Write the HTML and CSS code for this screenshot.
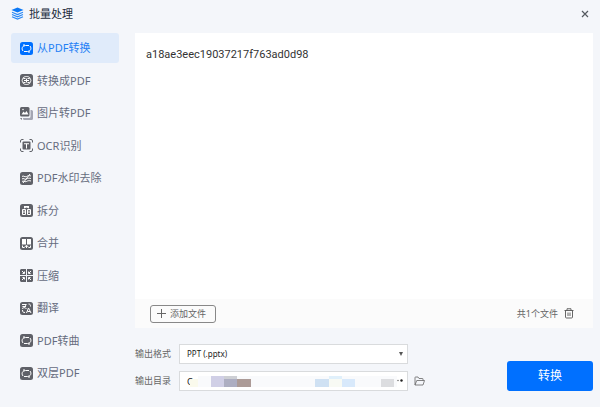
FILE: index.html
```html
<!DOCTYPE html>
<html lang="zh-CN">
<head>
    <meta charset="UTF-8">
    <meta name="viewport" content="width=device-width, initial-scale=1.0">
    <title>批量处理</title>
    <link rel="stylesheet" href="styles.css">
</head>
<body>
    <header class="titlebar">
        <svg class="logo" viewBox="0 0 26 26">
            <path d="M13 1 25 6 13 11 1 6Z" fill="#0b78f5"/>
            <path d="M2 10.500l11 4.500 11-4.500M2 15l11 4.500L24 15M2 19.500l11 4.500 11-4.500" fill="none" stroke="#2b8af7" stroke-width="2.400"/>
        </svg>
        <h1>批量处理</h1>
        <button type="button" class="close" aria-label="关闭">
            <svg viewBox="0 0 8 8"><path d="M1 1l6 6M7 1 1 7" stroke="#555a60" stroke-width="1.200"/></svg>
        </button>
    </header>

    <div class="layout">
        <nav class="sidebar">
            <button type="button" class="item active">
                <svg viewBox="0 0 26 26"><rect width="26" height="26" rx="5" fill="currentColor"/><path d="M6 18c-4-5-1-11 5-11h7M8 4v5M20 8c4 5 1 11-5 11H8M18 17v5" class="line"/></svg>
                <span>从PDF转换</span>
            </button>
            <button type="button" class="item">
                <svg viewBox="0 0 26 26"><rect width="26" height="26" rx="5" fill="currentColor"/><path d="M5 9c2-3 5-4 8-4s6 1 8 4M21 17c-2 3-5 4-8 4s-6-1-8-4M11 9H8c-5 0-5 8 0 8h3M15 9h3c5 0 5 8 0 8h-3M8 13h10M13 9v8" class="line"/></svg>
                <span>转换成PDF</span>
            </button>
            <button type="button" class="item">
                <svg viewBox="0 0 26 26"><path d="M21 6h2a3 3 0 0 1 3 3v14a3 3 0 0 1-3 3H9a3 3 0 0 1-3-3v-1h12a3 3 0 0 0 3-3Z" fill="#a4a6b2"/><rect width="19" height="19" rx="3" fill="currentColor"/><path d="m3 15 4-6 3 3 3-4 4 7Z" fill="#fff"/><circle cx="6" cy="5" r="1.500" fill="#fff"/><path d="M2 22v2h2" fill="none" stroke="currentColor" stroke-width="2"/></svg>
                <span>图片转PDF</span>
            </button>
            <button type="button" class="item">
                <svg viewBox="0 0 26 26"><path d="M1 7V4a3 3 0 0 1 3-3h3M19 1h3a3 3 0 0 1 3 3v3M25 19v3a3 3 0 0 1-3 3h-3M7 25H4a3 3 0 0 1-3-3v-3" fill="none" stroke="currentColor" stroke-width="2"/><rect x="5" y="5" width="16" height="16" rx="2" fill="currentColor"/><path d="M8 9.500h10M13 9.500V19" class="line"/></svg>
                <span>OCR识别</span>
            </button>
            <button type="button" class="item">
                <svg viewBox="0 0 26 26"><rect width="26" height="26" rx="5" fill="currentColor"/><path d="M4 9c3-3 5 2 9 0 3-2 6-2 9-1M4 14c3-3 5 2 9 0 3-2 6-2 9-1M4 19c3-3 5 2 9 0 3-2 6-2 9-1M20 4 6 22" class="line"/></svg>
                <span>PDF水印去除</span>
            </button>
            <button type="button" class="item">
                <svg viewBox="0 0 26 26"><rect width="26" height="26" rx="5" fill="currentColor"/><path d="M8 4h10v5l-5-2-5 2z" fill="#fff"/><path d="M5 11h6v10H5zM15 11h6v10h-6zM8 18v-5M18 18v-5" class="line"/></svg>
                <span>拆分</span>
            </button>
            <button type="button" class="item">
                <svg viewBox="0 0 26 26"><rect width="26" height="26" rx="5" fill="currentColor"/><path d="M4 4h8v11H4zM14 4h8v11h-8z" fill="#fff"/><path d="M5 17v4h4M21 17v4h-4M9 20l4-3 4 3M13 17v5" class="line"/></svg>
                <span>合并</span>
            </button>
            <button type="button" class="item">
                <svg viewBox="0 0 26 26"><path d="M2 0h10v12H0V2zM14 0h10l2 2v10H14zM0 14h12v12H2l-2-2zM14 14h12v10l-2 2H14z" fill="currentColor"/><path d="m4 4 4 4M9 5v4H5M22 4l-4 4M17 5v4h4M4 22l4-4M9 21v-4H5M22 22l-4-4M17 21v-4h4" class="line"/></svg>
                <span>压缩</span>
            </button>
            <button type="button" class="item">
                <svg viewBox="0 0 26 26"><rect width="26" height="26" rx="5" fill="currentColor"/><path d="M4 5h9M5 9h7M12 5c-1 4-4 7-8 8M6 8c1 3 4 4 7 5M17 4c3 0 4 1 4 5M5 16c0 4 1 5 5 5M13 22l4-10 5 10M15 19h5" class="line"/></svg>
                <span>翻译</span>
            </button>
            <button type="button" class="item">
                <svg viewBox="0 0 26 26"><rect width="26" height="26" rx="5" fill="currentColor"/><path d="M6 18c-4-5-1-11 5-11h7M8 4v5M20 8c4 5 1 11-5 11H8M18 17v5" class="line"/></svg>
                <span>PDF转曲</span>
            </button>
            <button type="button" class="item">
                <svg viewBox="0 0 26 26"><rect width="26" height="26" rx="5" fill="currentColor"/><path d="M6 18c-4-5-1-11 5-11h7M8 4v5M20 8c4 5 1 11-5 11H8M18 17v5" class="line"/></svg>
                <span>双层PDF</span>
            </button>
        </nav>

        <main class="content">
            <section class="files">
                <ul class="file-list">
                    <li>a18ae3eec19037217f763ad0d98</li>
                </ul>
                <div class="toolbar">
                    <button type="button" class="add">
                        <svg viewBox="0 0 9 9"><path d="M4.500 0v9M0 4.500h9" stroke="#666" stroke-width="1"/></svg>
                        添加文件
                    </button>
                    <span class="count">共1个文件</span>
                    <button type="button" class="trash" aria-label="清空">
                        <svg viewBox="0 0 20 22"><path d="M1 5h18M6 5V1.500h8V5M3 5v13a2 2 0 0 0 2 2h10a2 2 0 0 0 2-2V5M8 9v7M12 9v7" fill="none" stroke="#555" stroke-width="1.800"/></svg>
                    </button>
                </div>
            </section>

            <form class="output">
                <div class="fields">
                    <label for="format">输出格式</label>
                    <div class="select-wrap">
                        <select id="format">
                            <option>PPT (.pptx)</option>
                        </select>
                    </div>
                    <label for="folder">输出目录</label>
                    <div class="path">
                        <input type="text" id="folder" value="C">
                        <svg class="mask" viewBox="0 0 207 11">
                            <path d="M8 0h199v11H8z" fill="#f9fafc"/>
                            <path d="M0 3h8v8H0z" fill="#fafaec"/>
                            <path d="M21 0h13v11H21z" fill="#d0cfe6"/>
                            <path d="M34 0h13v3H34z" fill="#cdcfd4"/>
                            <path d="M34 3h13v8H34z" fill="#adaec2"/>
                            <path d="M47 3h14v8H47z" fill="#ac9b97"/>
                            <path d="M125 3h14v8h-14z" fill="#cfe1f3"/>
                            <path d="M139 0h13v3h-13z" fill="#e0f0fb"/>
                            <path d="M139 3h13v8h-13z" fill="#f8faf4"/>
                            <path d="M152 3h13v8h-13z" fill="#d8e9fb"/>
                            <path d="M191 3h13v8h-13z" fill="#dcdde0"/>
                        </svg>
                        <button type="button" class="more" aria-label="浏览">
                            <svg viewBox="0 0 6 3"><circle cx="1" cy="1.500" r=".7" fill="#555"/><circle cx="4.500" cy="1.500" r="1.200" fill="#222"/></svg>
                        </button>
                    </div>
                    <button type="button" class="folder" aria-label="打开目录">
                        <svg viewBox="0 0 22 20"><path d="M2 18V3a1 1 0 0 1 1-1h5l2 3h7a1 1 0 0 1 1 1v3M2 18 5.500 9H21l-3 9z" fill="none" stroke="#666" stroke-width="1.600"/></svg>
                    </button>
                </div>
                <button type="button" class="convert">转换</button>
            </form>
        </main>
    </div>
</body>
</html>
```
FILE: styles.css
```css
* {
    box-sizing: border-box;
}
body {
    margin: 0;
    min-height: 100vh;
    display: flex;
    flex-direction: column;
    background: #f4f6fa;
    color: #333;
    font-family: "Noto Sans", "Noto Sans CJK SC", sans-serif;
    font-size: 11px;
    line-height: 16px;
}
button, input, select {
    font: inherit;
    color: inherit;
}
button {
    padding: 0;
    border: none;
    background: none;
    cursor: pointer;
}
svg {
    display: block;
    flex: none;
}
.line {
    fill: none;
    stroke: #fff;
    stroke-width: 2;
}

/* title bar */
.titlebar {
    display: flex;
    align-items: center;
    height: 27px;
    padding: 0 11px;
}
.titlebar h1 {
    margin: 0 auto 0 5px;
    font-size: 11px;
    font-weight: normal;
    color: #222b3c;
}
.logo {
    width: 13px;
    height: 13px;
}
.close svg {
    width: 8px;
    height: 8px;
}

.layout {
    flex: 1;
    display: flex;
    gap: 16px;
    padding: 6px 7px 0 11px;
}

/* sidebar */
.sidebar {
    flex: none;
    width: 108px;
    display: flex;
    flex-direction: column;
    justify-content: space-between;
    padding-bottom: 19px;
}
.item {
    display: flex;
    align-items: center;
    gap: 4px;
    height: 30px;
    padding: 0 9px;
    border-radius: 3px;
    color: #5f6168;
    white-space: nowrap;
}
.item svg {
    width: 13px;
    height: 13px;
}
.item span {
    color: #666c7e;
}
.item.active {
    background: #e0ebfa;
    color: #0070ff;
}
.item.active span {
    color: #1f80f5;
}

/* file panel */
.content {
    flex: 1;
    min-width: 0;
    display: flex;
    flex-direction: column;
}
.files {
    flex: 1;
    display: flex;
    flex-direction: column;
    background: #fff;
}
.file-list {
    flex: 1;
    margin: 0;
    padding: 14px 11px;
    list-style: none;
    font-family: Roboto, "Noto Sans CJK SC", sans-serif;
}
.toolbar {
    display: flex;
    align-items: center;
    height: 29px;
    padding: 0 19px 0 15px;
    background: #fbfbfb;
    font-size: 9px;
    color: #666;
}
.add {
    display: flex;
    align-items: center;
    gap: 4px;
    height: 18px;
    padding: 0 9px 0 6px;
    border: 1px solid #888;
    border-radius: 3px;
}
.add svg {
    width: 9px;
    height: 9px;
}
.count {
    margin: 0 6px 0 auto;
}
.trash svg {
    width: 10px;
    height: 11px;
}

/* output settings */
.output {
    display: flex;
    align-items: flex-end;
    justify-content: space-between;
    padding: 16px 0;
}
.fields {
    flex: 1;
    display: grid;
    grid-template-columns: 38px minmax(0, 229px) 11px;
    column-gap: 6px;
    row-gap: 7px;
    align-items: center;
    font-size: 9px;
    color: #666;
}
.fields label {
    grid-column: 1;
    white-space: nowrap;
}
.select-wrap, .path {
    position: relative;
    height: 20px;
    border: 1px solid #d9dbdd;
    background: #fff;
    color: #222;
}
.select-wrap::after {
    content: "";
    position: absolute;
    right: 4px;
    top: 7px;
    border: 2px solid transparent;
    border-top: 4px solid #555;
    pointer-events: none;
}
.select-wrap select, .path input {
    display: block;
    width: 100%;
    height: 18px;
    padding: 0 7px;
    border: none;
    background: none;
    appearance: none;
}
.select-wrap select {
    font-size: 8px;
}
.mask {
    position: absolute;
    left: 10px;
    top: 4px;
    width: 207px;
    height: 11px;
}
.more {
    position: absolute;
    right: 4px;
    top: 7px;
}
.more svg {
    width: 6px;
    height: 3px;
}
.folder svg {
    width: 11px;
    height: 10px;
}
.convert {
    width: 86px;
    height: 30px;
    border-radius: 3px;
    background: #0070ff;
    color: #fff;
    font-size: 12px;
}
```
